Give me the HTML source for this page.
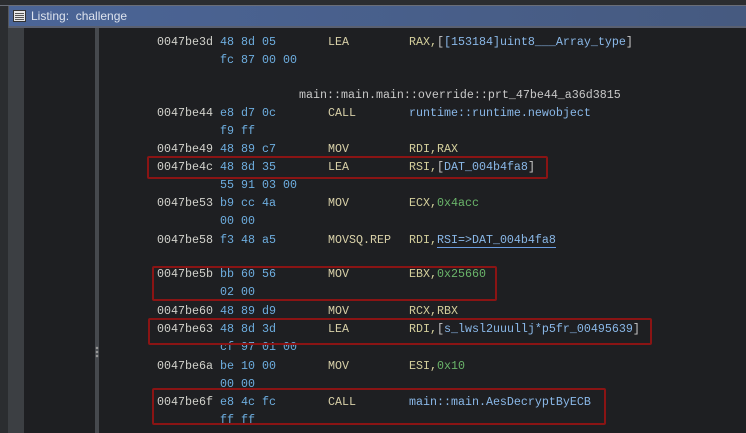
<!DOCTYPE html>
<html><head><style>
body{margin:0;width:746px;height:433px;overflow:hidden;background:#1e1f22;position:relative;font-family:"Liberation Mono",monospace;font-size:11.67px}
.top{position:absolute;left:0;top:0;width:746px;height:5px;background:#2b2d30;border-bottom:1px solid #6a6e78}
.title{position:absolute;left:9px;top:6px;width:737px;height:20px;background:linear-gradient(90deg,#4b6597,#465a80);border-bottom:2px solid #5a6070;font-family:"Liberation Sans",sans-serif;font-size:12px;color:#dde3ee;line-height:20px}
.title span{position:absolute;left:22px}
.ico{position:absolute;left:4px;top:4px;width:11px;height:10px;background:#e8e8e8;border:1px solid #333}
.ico:before{content:"";position:absolute;left:1px;top:2px;width:9px;height:1px;background:#555;box-shadow:0 2px #555,0 4px #555,0 6px #555}
.lb{position:absolute;left:0;top:6px;width:8px;height:427px;background:#2b2d30;border-right:1px solid #55585e}
.g1{position:absolute;left:8px;top:28px;width:16px;height:405px;background:#3c3f43}
.g2{position:absolute;left:24px;top:28px;width:72px;height:405px;background:#1e1f22}
.dv{position:absolute;left:95px;top:28px;width:4px;height:405px;background:#46494e}
.dots{position:absolute;left:95px;top:346px;width:4px;height:12px;background:radial-gradient(circle,#999 1px,transparent 1.5px) 0 0/4px 4px}
.r{position:absolute;left:0;width:746px;height:14px;white-space:pre;color:#d0d0c8;line-height:14px}
.r span{position:absolute}
.a{color:#d2d2cc;left:157px}.b{color:#6eaee0;left:220px}.m{color:#d8d0a8;left:328px}.op{left:409px}
.o{color:#d4cf9c}.h{color:#6ab46a}.n{color:#8ab8e8}.w{color:#c8c8c8}.u{color:#8ab8e8;border-bottom:1px solid #6a9ce0}
.r .op span{position:static}
.box{position:absolute;border:2px solid #8a1414;border-radius:2px}
</style></head><body>
<div class="top"></div>
<div class="lb"></div>
<div class="title"><div class="ico"></div><span>Listing:&nbsp; challenge</span></div>
<div class="g1"></div><div class="g2"></div><div class="dv"></div><div class="dots"></div>

<div class="r" style="top:35px"><span class="a">0047be3d</span><span class="b">48 8d 05</span><span class="m">LEA</span><span class="op"><span class="o">RAX,</span><span class="w">[</span><span class="n">[153184]uint8___Array_type</span><span class="w">]</span></span></div>
<div class="r" style="top:53px"><span class="b">fc 87 00 00</span></div>
<div class="r" style="top:88px"><span class="w" style="left:299px">main::main.main::override::prt_47be44_a36d3815</span></div>
<div class="r" style="top:106px"><span class="a">0047be44</span><span class="b">e8 d7 0c</span><span class="m">CALL</span><span class="op"><span class="n">runtime::runtime.newobject</span></span></div>
<div class="r" style="top:124px"><span class="b">f9 ff</span></div>
<div class="r" style="top:142px"><span class="a">0047be49</span><span class="b">48 89 c7</span><span class="m">MOV</span><span class="op"><span class="o">RDI,RAX</span></span></div>
<div class="r" style="top:160px"><span class="a">0047be4c</span><span class="b">48 8d 35</span><span class="m">LEA</span><span class="op"><span class="o">RSI,</span><span class="w">[</span><span class="n">DAT_004b4fa8</span><span class="w">]</span></span></div>
<div class="r" style="top:178px"><span class="b">55 91 03 00</span></div>
<div class="r" style="top:196px"><span class="a">0047be53</span><span class="b">b9 cc 4a</span><span class="m">MOV</span><span class="op"><span class="o">ECX,</span><span class="h">0x4acc</span></span></div>
<div class="r" style="top:214px"><span class="b">00 00</span></div>
<div class="r" style="top:233px"><span class="a">0047be58</span><span class="b">f3 48 a5</span><span class="m">MOVSQ.REP</span><span class="op"><span class="o">RDI,</span><span class="u">RSI=&gt;DAT_004b4fa8</span></span></div>
<div class="r" style="top:267px"><span class="a">0047be5b</span><span class="b">bb 60 56</span><span class="m">MOV</span><span class="op"><span class="o">EBX,</span><span class="h">0x25660</span></span></div>
<div class="r" style="top:285px"><span class="b">02 00</span></div>
<div class="r" style="top:304px"><span class="a">0047be60</span><span class="b">48 89 d9</span><span class="m">MOV</span><span class="op"><span class="o">RCX,RBX</span></span></div>
<div class="r" style="top:322px"><span class="a">0047be63</span><span class="b">48 8d 3d</span><span class="m">LEA</span><span class="op"><span class="o">RDI,</span><span class="w">[</span><span class="n">s_lwsl2uuullj*p5fr_00495639</span><span class="w">]</span></span></div>
<div class="r" style="top:340px"><span class="b">cf 97 01 00</span></div>
<div class="r" style="top:359px"><span class="a">0047be6a</span><span class="b">be 10 00</span><span class="m">MOV</span><span class="op"><span class="o">ESI,</span><span class="h">0x10</span></span></div>
<div class="r" style="top:377px"><span class="b">00 00</span></div>
<div class="r" style="top:395px"><span class="a">0047be6f</span><span class="b">e8 4c fc</span><span class="m">CALL</span><span class="op"><span class="n">main::main.AesDecryptByECB</span></span></div>
<div class="r" style="top:413px"><span class="b">ff ff</span></div>

<div class="box" style="left:147px;top:156px;width:397px;height:19px"></div>
<div class="box" style="left:152px;top:266px;width:341px;height:31px"></div>
<div class="box" style="left:148px;top:318px;width:500px;height:23px"></div>
<div class="box" style="left:152px;top:388px;width:450px;height:33px"></div>
</body></html>
